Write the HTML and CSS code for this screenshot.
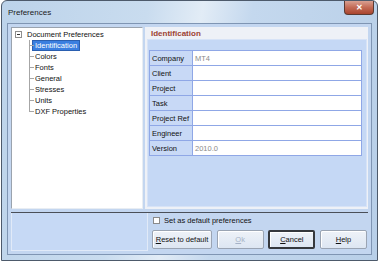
FILE: index.html
```html
<!DOCTYPE html>
<html lang="en">

<head>
    <meta charset="UTF-8">
    <title>Preferences</title>
    <link rel="stylesheet" href="styles.css">
</head>

<body>
    <div class="window">
        <div class="titlebar">
            <span class="title">Preferences</span>
            <div class="close">&#x2715;</div>
        </div>

        <div class="client">
            <div class="main">
                <div class="tree">
                    <div class="root">
                        <span class="toggle"></span>
                        <span>Document Preferences</span>
                    </div>
                    <ul class="children">
                        <li><span class="selected">Identification</span></li>
                        <li><span>Colors</span></li>
                        <li><span>Fonts</span></li>
                        <li><span>General</span></li>
                        <li><span>Stresses</span></li>
                        <li><span>Units</span></li>
                        <li><span>DXF Properties</span></li>
                    </ul>
                </div>

                <div class="panel">
                    <div class="panel-title">Identification</div>
                    <div class="panel-body">
                        <table class="fields">
                            <tr><td class="label">Company</td><td class="value">MT4</td></tr>
                            <tr><td class="label">Client</td><td class="value"></td></tr>
                            <tr><td class="label">Project</td><td class="value"></td></tr>
                            <tr><td class="label">Task</td><td class="value"></td></tr>
                            <tr><td class="label">Project Ref</td><td class="value"></td></tr>
                            <tr><td class="label">Engineer</td><td class="value"></td></tr>
                            <tr><td class="label">Version</td><td class="value">2010.0</td></tr>
                        </table>
                    </div>
                </div>
            </div>

            <div class="bottom">
                <div class="status"></div>
                <div class="actions">
                    <label class="default-check">
                        <span class="box"></span>
                        <span>Set as default preferences</span>
                    </label>
                    <div class="buttons">
                        <div class="btn reset"><u>R</u>eset to default</div>
                        <div class="btn disabled"><u>O</u>k</div>
                        <div class="btn primary"><u>C</u>ancel</div>
                        <div class="btn"><u>H</u>elp</div>
                    </div>
                </div>
            </div>
        </div>
    </div>
</body>

</html>
```

FILE: styles.css
```css
body {
    margin: 0;
    padding: 0 2px 0 1px;
    background: #ffffff;
    font-family: "Liberation Sans", Arial, sans-serif;
    font-size: 7.5px;
    color: #111111;
}

.window {
    box-sizing: border-box;
    width: 377px;
    height: 261px;
    padding: 0 5px 5px 5px;
    border: 1px solid #4d5a6b;
    border-radius: 6px 6px 0 0;
    background: linear-gradient(100deg, #bcd3ea 0%, #c9dcef 35%, #e2ecf6 48%, #c4d8ee 60%, #b8cfe8 100%);
    display: flex;
    flex-direction: column;
}

.titlebar {
    height: 22px;
    display: flex;
    justify-content: space-between;
    align-items: flex-start;
}

.title {
    font-size: 8px;
    padding: 7px 0 0 1px;
    color: #1b1b1b;
}

.close {
    width: 28px;
    height: 13px;
    margin-right: -2px;
    border: 1px solid #5b3a32;
    border-top: none;
    border-radius: 0 0 4px 4px;
    background: linear-gradient(#d9a091, #c36a55 50%, #a9452f);
    color: #ffffff;
    font-size: 8px;
    font-weight: bold;
    display: flex;
    align-items: center;
    justify-content: center;
}

.client {
    flex: 1;
    border: 1px solid #7f95b3;
    background: #c3d6f0;
    padding: 3px;
    display: flex;
    flex-direction: column;
}

.main {
    height: 182px;
    display: flex;
    gap: 2px;
}

/*----- tree on the left -----*/
.tree {
    box-sizing: border-box;
    width: 132px;
    background: #ffffff;
    border: 1px solid #9aa3ae;
    border-right-color: #e8edf3;
    border-bottom-color: #e8edf3;
    padding: 1px 0 0 3px;
}

.root {
    height: 11px;
    display: flex;
    align-items: center;
    gap: 5px;
}

.toggle {
    box-sizing: border-box;
    width: 7px;
    height: 7px;
    border: 1px solid #8e8e8e;
    display: flex;
    align-items: center;
    justify-content: center;
}

.toggle::after {
    content: "";
    width: 3px;
    height: 1px;
    background: #333333;
}

.children {
    list-style: none;
    margin: 0 0 0 14px;
    padding: 0;
}

.children li {
    position: relative;
    height: 11px;
    line-height: 11px;
    padding-left: 4px;
}

.children li::before {
    content: "";
    position: absolute;
    left: 0;
    top: 0;
    width: 4px;
    height: 5px;
    border-left: 1px solid #a6a6a6;
    border-bottom: 1px solid #a6a6a6;
}

.children li:not(:last-child)::after {
    content: "";
    position: absolute;
    left: 0;
    top: 5px;
    bottom: 0;
    border-left: 1px solid #a6a6a6;
}

.children span {
    padding: 0 2px;
}

.selected {
    display: inline-block;
    height: 9px;
    line-height: 9px;
    background: #3b7fe0;
    color: #ffffff;
    box-shadow: 0 0 0 1px #2a5fb0;
}

/*----- identification panel -----*/
.panel {
    flex: 1;
    background: #eef1f7;
    display: flex;
    flex-direction: column;
}

.panel-title {
    height: 12px;
    line-height: 13px;
    padding-left: 6px;
    font-size: 8px;
    font-weight: bold;
    color: #9c4232;
}

.panel-body {
    flex: 1;
    margin: 0 1px 2px 2px;
    background: #c5d8f5;
    border: 1px solid #d7e3f7;
    padding: 10px 4px 0 1px;
}

.fields {
    width: 100%;
    border-collapse: collapse;
    border: 1px solid #8fa7e6;
}

.fields td {
    height: 14px;
    padding: 0 2px;
    border: 1px solid #8fa7e6;
}

.label {
    width: 38px;
    background: #c8d9f6;
    white-space: nowrap;
}

.value {
    background: #ffffff;
    color: #8a8a8a;
}

/*----- bottom strip -----*/
.bottom {
    flex: 1;
    margin-top: 3px;
    border-top: 1px solid #4a4f58;
    display: flex;
}

.status {
    box-sizing: border-box;
    width: 137px;
    background: #c6d9f5;
    border: 1px solid #e1eaf8;
    border-top: none;
}

.actions {
    flex: 1;
    padding: 0 1px 0 4px;
    display: flex;
    flex-direction: column;
}

.default-check {
    height: 11px;
    margin-top: 2px;
    display: flex;
    align-items: center;
    gap: 4px;
    padding-left: 1px;
}

.default-check .box {
    box-sizing: border-box;
    width: 7px;
    height: 7px;
    background: #ffffff;
    border: 1px solid #8a8a8a;
}

.buttons {
    margin-top: 4px;
    display: flex;
    justify-content: space-between;
}

.btn {
    box-sizing: border-box;
    width: 47px;
    height: 19px;
    border: 1px solid #9aa4b3;
    border-radius: 2px;
    background: linear-gradient(#eef2f8, #dde6f2);
    box-shadow: inset 1px 1px 0 #ffffff;
    display: flex;
    align-items: center;
    justify-content: center;
}

.reset {
    width: 60px;
}

.primary {
    border: 2px solid #35383d;
}

.disabled {
    color: #a6b2c6;
}
```
